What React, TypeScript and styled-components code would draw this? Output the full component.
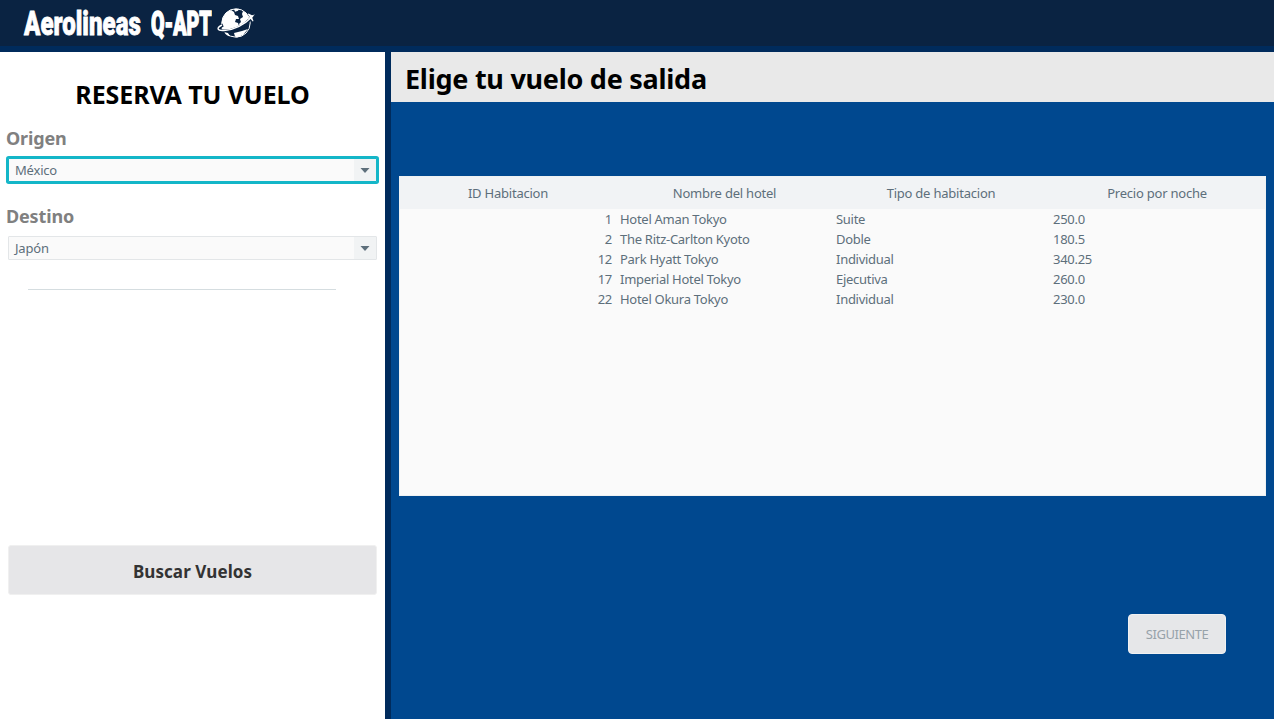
import React from "react";
import styled, { createGlobalStyle } from "styled-components";

const GlobalStyle = createGlobalStyle`
  * { box-sizing: border-box; }
  html, body { margin: 0; padding: 0; overflow: hidden; }
  body { font-family: "Noto Sans", "Open Sans", sans-serif; font-size: 13px; color: #5d6f7b; }
  h1, h2 { margin: 0; }
`;

const Page = styled.div`
  width: 1274px;
  height: 719px;
  display: flex;
  flex-direction: column;
  background: #002b5c;
`;

const Header = styled.header`
  height: 46px;
  margin-bottom: 6px;
  flex: none;
  display: flex;
  align-items: center;
  padding-left: 24px;
  background: #0a2342;
`;

const Brand = styled.h1`
  width: 192px;
  display: flex;
  font-family: Roboto, sans-serif;
  font-weight: 900;
  font-size: 34px;
  line-height: 46px;
  white-space: nowrap;
  color: #fff;
`;

const BrandWord = styled.span<{ $width: number; $scale: number; $stroke: number }>`
  width: ${(p) => p.$width}px;
  flex: none;
  transform: scaleX(${(p) => p.$scale});
  transform-origin: 0 50%;
  -webkit-text-stroke: ${(p) => p.$stroke}px #fff;
`;

const Logo = styled.svg`
  flex: none;
  width: 40px;
  height: 32px;
`;

const Body = styled.div`
  flex: 1;
  min-height: 0;
  display: flex;
  gap: 6px;
`;

const Sidebar = styled.aside`
  width: 385px;
  flex: none;
  display: flex;
  flex-direction: column;
  background: #fff;
  padding: 0 8px;
`;

const SidebarTitle = styled.h2`
  margin-top: 25px;
  height: 35px;
  line-height: 34px;
  font-size: 25px;
  letter-spacing: -0.1px;
  text-align: center;
  white-space: nowrap;
  color: #000;
`;

const Label = styled.label`
  display: block;
  margin: 14px 0 7px -2px;
  height: 25px;
  line-height: 25px;
  font-size: 18px;
  font-weight: 700;
  letter-spacing: -0.15px;
  color: #808080;
`;

const Select = styled.div<{ $focused?: boolean }>`
  height: 24px;
  display: flex;
  flex: none;
  align-items: stretch;
  border: 1px solid ${(p) => (p.$focused ? "#14b6c8" : "#e3e6e8")};
  box-shadow: ${(p) => (p.$focused ? "0 0 0 2px #14b6c8" : "none")};
  border-radius: 1px;
  background: #fafafa;
  margin-bottom: ${(p) => (p.$focused ? "8px" : "0")};
  width: 369px;
`;

const SelectValue = styled.span`
  flex: 1;
  padding-left: 6px;
  line-height: 23px;
  letter-spacing: -0.2px;
`;

const SelectArrow = styled.span`
  width: 22px;
  display: flex;
  align-items: center;
  justify-content: center;
  background: #f1f3f4;
`;

const Divider = styled.div`
  flex: none;
  height: 1px;
  width: 308px;
  margin: 29px 0 0 20px;
  background: #d5dde0;
`;

const SearchButton = styled.button`
  margin-top: 255px;
  height: 50px;
  flex: none;
  padding: 2px 0 0;
  border: 1px solid #f0f0f0;
  border-radius: 3px;
  background: #e6e6e8;
  color: #333;
  font: 700 17px "Noto Sans", sans-serif;
  letter-spacing: 0.08px;
`;

const Main = styled.main`
  flex: 1;
  display: flex;
  flex-direction: column;
  background: #00488f;
`;

const MainTitle = styled.h2`
  height: 50px;
  flex: none;
  padding: 1px 0 0 14px;
  line-height: 52px;
  font-size: 27px;
  letter-spacing: -0.26px;
  color: #000;
  background: #e9e9e9;
`;

const Table = styled.section`
  height: 320px;
  flex: none;
  margin: 74px 8px 0;
  border: 1px solid #eef1f2;
  background: #fafafa;
`;

const Row = styled.div<{ $head?: boolean }>`
  display: grid;
  grid-template-columns: 217px 216px 217px 215px;
  height: ${(p) => (p.$head ? "32px" : "20px")};
  line-height: ${(p) => (p.$head ? "32px" : "20px")};
  letter-spacing: ${(p) => (p.$head ? "-0.22px" : "-0.28px")};
  background: ${(p) => (p.$head ? "#f1f3f5" : "transparent")};
`;

const Cell = styled.span<{ $align?: string }>`
  text-align: ${(p) => p.$align || "left"};
  padding-left: ${(p) => (p.$align === "center" ? "0" : "3px")};
  padding-right: ${(p) => (p.$align === "right" ? "5px" : p.$align === "center" ? "1px" : "0")};
`;

const NextButton = styled.button`
  align-self: flex-end;
  margin: 118px 48px 0 0;
  width: 98px;
  height: 40px;
  padding: 0;
  border: 1px solid #f0f1f2;
  border-radius: 4px;
  background: #e6e7e9;
  color: #97a2a9;
  font: 13px "Noto Sans", sans-serif;
  letter-spacing: -0.45px;
`;

const columns = ["ID Habitacion", "Nombre del hotel", "Tipo de habitacion", "Precio por noche"];
const rooms = [
  ["1", "Hotel Aman Tokyo", "Suite", "250.0"],
  ["2", "The Ritz-Carlton Kyoto", "Doble", "180.5"],
  ["12", "Park Hyatt Tokyo", "Individual", "340.25"],
  ["17", "Imperial Hotel Tokyo", "Ejecutiva", "260.0"],
  ["22", "Hotel Okura Tokyo", "Individual", "230.0"],
];

const Arrow = () => (
  <svg width="10" height="5" viewBox="0 0 10 5">
    <path d="M0.500 0H9.500L5 5Z" fill="#5d6f7b" />
  </svg>
);

const GlobeLogo = () => (
  <Logo viewBox="0 0 40 32">
    <circle cx="20" cy="16" r="14.2" fill="#0a2342" stroke="#fff" strokeWidth="1" />
    <path
      fill="#fff"
      d="M6.500 12C8 7 11 4 15 3l3 2 1 3 3 1 1 3-3 0-1 3 3 1 1 3-4 3-8 2-5-1C5 20 5.500 15 6.500 12ZM18 2l5-.2-1 2-3 1ZM27 4c4 2 6 6 7 10l-6 5-4 1-1-3 2-2-1-3 3-2-1-3ZM18 26l8-2 6-2-5 6-6 2.500-2-1ZM8 25l4 1 2 3.500C12 29 10 28 8 25Z"
    />
    <path d="M7 18C1 21 2 24 8 24c9 0 20-4 27-13" fill="none" stroke="#0a2342" strokeWidth="3.2" />
    <path d="M6 18C0 21 1 24 8 23.500c9-.5 19-4.500 29-14.500" fill="none" stroke="#fff" strokeWidth="1.4" />
    <path d="M39 7.500l-3 2.500 1.500 4-.8.500-2.500-3-3 .8 2.500-2.300-2-3 .8-.4 3.500 1.700Z" fill="#fff" />
  </Logo>
);

export default function App() {
  return (
    <Page>
      <GlobalStyle />
      <Header>
        <Brand>
          <BrandWord $width={127} $scale={0.708} $stroke={0.8}>Aerolineas</BrandWord>
          <BrandWord $width={65} $scale={0.575} $stroke={1.5}>Q-APT</BrandWord>
        </Brand>
        <GlobeLogo />
      </Header>
      <Body>
        <Sidebar>
          <SidebarTitle>RESERVA TU VUELO</SidebarTitle>
          <Label>Origen</Label>
          <Select $focused>
            <SelectValue>México</SelectValue>
            <SelectArrow><Arrow /></SelectArrow>
          </Select>
          <Label>Destino</Label>
          <Select>
            <SelectValue>Japón</SelectValue>
            <SelectArrow><Arrow /></SelectArrow>
          </Select>
          <Divider />
          <SearchButton>Buscar Vuelos</SearchButton>
        </Sidebar>
        <Main>
          <MainTitle>Elige tu vuelo de salida</MainTitle>
          <Table>
            <Row $head>
              {columns.map((name) => <Cell key={name} $align="center">{name}</Cell>)}
            </Row>
            {rooms.map((room) => (
              <Row key={room[0]}>
                {room.map((value, i) => (
                  <Cell key={i} $align={i === 0 ? "right" : "left"}>{value}</Cell>
                ))}
              </Row>
            ))}
          </Table>
          <NextButton>SIGUIENTE</NextButton>
        </Main>
      </Body>
    </Page>
  );
}
